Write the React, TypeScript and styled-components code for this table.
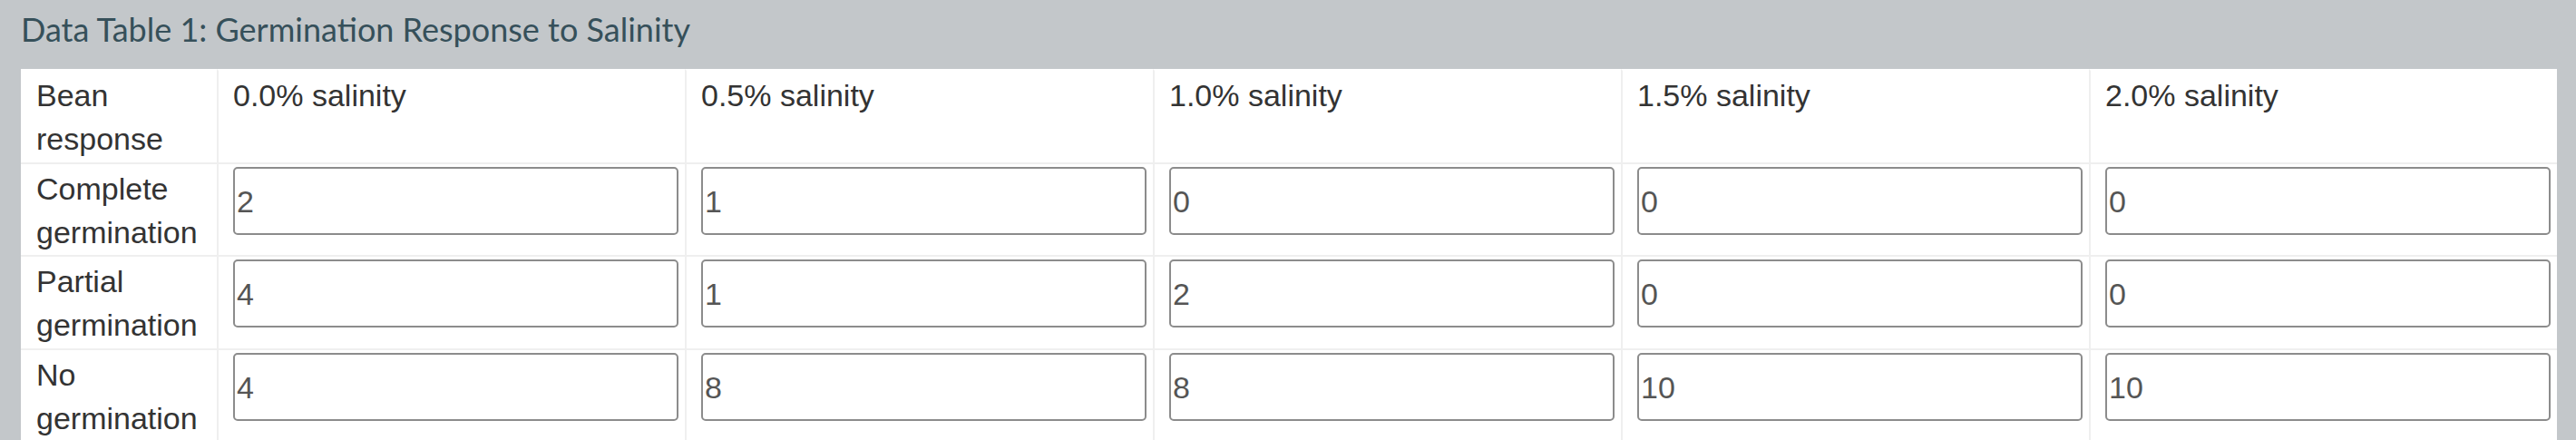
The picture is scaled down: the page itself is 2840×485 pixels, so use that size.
import React from "react";
import styled, { createGlobalStyle } from "styled-components";

const GlobalStyle = createGlobalStyle`
  html, body {
    margin: 0;
    padding: 0;
    background: #c3c7ca;
  }
`;

const Page = styled.div`
  box-sizing: border-box;
  width: 2840px;
  min-height: 485px;
  padding: 0 21px 0 23px;
  background: #c3c7ca;
`;

const Title = styled.h2`
  margin: 0;
  padding: 13px 0 25px;
  font-family: Lato, "Open Sans", sans-serif;
  font-weight: 400;
  font-size: 36px;
  line-height: 38px;
  color: #36505a;
  white-space: nowrap;
`;

const Grid = styled.div`
  display: grid;
  grid-template-columns: 216px repeat(5, 516px);
  background: #ffffff;
`;

const Cell = styled.div<{ $lead?: boolean; $head?: boolean }>`
  box-sizing: border-box;
  padding: 3px ${(p) => (p.$lead ? "4px" : "7px")} 1.5px ${(p) => (p.$lead ? "17px" : "16px")};
  border-top: 2px solid ${(p) => (p.$head ? "#ffffff" : "#efefef")};
  border-left: ${(p) => (p.$lead ? "none" : "2px solid #efefef")};
  font-family: "Liberation Sans", Arial, sans-serif;
  font-size: 34px;
  line-height: 48px;
  color: #333333;
  white-space: nowrap;
`;

const ValueInput = styled.input`
  display: block;
  box-sizing: border-box;
  width: 100%;
  height: 75px;
  margin: 0;
  padding: 2px 0 0 2px;
  border: 2px solid #8c8c8c;
  border-radius: 5px;
  background: #ffffff;
  font-family: "Liberation Sans", Arial, sans-serif;
  font-size: 34px;
  color: #555555;
  outline: none;
`;

const headers = ["0.0% salinity", "0.5% salinity", "1.0% salinity", "1.5% salinity", "2.0% salinity"];

const rows: { label: string[]; values: string[] }[] = [
  { label: ["Complete", "germination"], values: ["2", "1", "0", "0", "0"] },
  { label: ["Partial", "germination"], values: ["4", "1", "2", "0", "0"] },
  { label: ["No", "germination"], values: ["4", "8", "8", "10", "10"] },
];

export default function App() {
  return (
    <>
      <GlobalStyle />
      <Page>
        <Title>Data Table 1: Germination Response to Salinity</Title>
        <Grid>
          <Cell $lead $head>
            Bean
            <br />
            response
          </Cell>
          {headers.map((h) => (
            <Cell key={h} $head>
              {h}
            </Cell>
          ))}
          {rows.map((r) => (
            <React.Fragment key={r.label.join(" ")}>
              <Cell $lead>
                {r.label[0]}
                <br />
                {r.label[1]}
              </Cell>
              {r.values.map((v, i) => (
                <Cell key={i}>
                  <ValueInput type="text" value={v} readOnly />
                </Cell>
              ))}
            </React.Fragment>
          ))}
        </Grid>
      </Page>
    </>
  );
}
